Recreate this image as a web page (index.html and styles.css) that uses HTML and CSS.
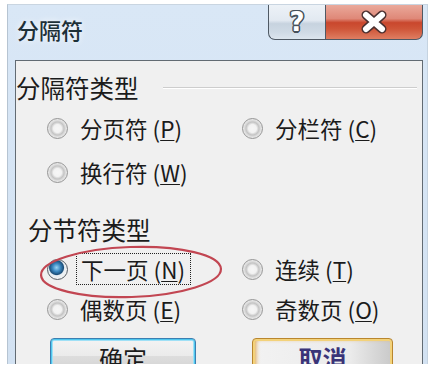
FILE: index.html
```html
<!DOCTYPE html>
<html lang="zh-CN">
<head>
<meta charset="utf-8">
<title>分隔符</title>
<link rel="stylesheet" href="styles.css">
</head>
<body>
<div class="window">
  <div class="titlebar">
    <div class="title">分隔符</div>
    <div class="caption">
      <div class="cbtn help"><span class="qmark">?</span></div>
      <div class="cbtn close">
        <svg width="30" height="24" viewBox="0 0 30 24">
          <path d="M7 5 L23 19 M23 5 L7 19" stroke="#4a3030" stroke-width="9" stroke-linecap="round"/>
          <path d="M7 5 L23 19 M23 5 L7 19" stroke="#ffffff" stroke-width="6" stroke-linecap="round"/>
        </svg>
      </div>
    </div>
  </div>
  <div class="client">
    <div class="ghead">
      <span class="glabel">分隔符类型</span>
      <span class="gline"></span>
    </div>
    <div class="options rows1">
      <div class="opt"><span class="radio"></span><span class="txt">分页符 (<u>P</u>)</span></div>
      <div class="opt"><span class="radio"></span><span class="txt">分栏符 (<u>C</u>)</span></div>
      <div class="opt"><span class="radio"></span><span class="txt">换行符 (<u>W</u>)</span></div>
    </div>
    <div class="ghead second">
      <span class="glabel">分节符类型</span>
    </div>
    <div class="options rows2">
      <div class="opt"><span class="radio on"></span><span class="txt focus">下一页 (<u>N</u>)</span></div>
      <div class="opt"><span class="radio"></span><span class="txt">连续 (<u>T</u>)</span></div>
      <div class="opt"><span class="radio"></span><span class="txt">偶数页 (<u>E</u>)</span></div>
      <div class="opt"><span class="radio"></span><span class="txt">奇数页 (<u>O</u>)</span></div>
    </div>
    <div class="buttons">
      <div class="btn ok">确定</div>
      <div class="btn cancel">取消</div>
    </div>
  </div>
  <svg class="mark" width="190" height="62" viewBox="0 0 190 62">
    <ellipse cx="94" cy="30" rx="90" ry="25" fill="none" stroke="#c24652" stroke-width="2.2" transform="rotate(-2 94 30)"/>
  </svg>
</div>
</body>
</html>
```

FILE: styles.css
```css
html, body {
  margin: 0;
  padding: 0;
}
body {
  width: 436px;
  height: 370px;
  overflow: hidden;
  background: #ffffff;
  font-family: "Noto Sans CJK SC", "Noto Sans", sans-serif;
  color: #1b1b1b;
}
.window {
  position: relative;
  box-sizing: border-box;
  margin: 4px 0 0 7px;
  width: 421px;
  height: 360px;
  overflow: hidden;
  background: linear-gradient(to bottom, #d9e7f6 0%, #d5e4f4 60%, #d3e2f2 100%);
  border-left: 1px solid #b6c4d2;
  border-top: 1px solid #c9d5e1;
  border-right: 1px solid #c5d3e0;
  display: flex;
  flex-direction: column;
}
.titlebar {
  display: flex;
  align-items: flex-start;
  height: 55px;
  flex: none;
}
.title {
  margin: 12px 0 0 9px;
  font-size: 22px;
  line-height: 24px;
  color: #1d3038;
  font-weight: 500;
  text-shadow: 0 0 6px rgba(255,255,255,0.9);
}
.caption {
  margin-left: auto;
  margin-right: 4px;
  display: flex;
  height: 35px;
}
.cbtn {
  box-sizing: border-box;
  height: 35px;
  display: flex;
  align-items: center;
  justify-content: center;
  border: 1px solid #4f5964;
  border-top: none;
}
.help {
  width: 57px;
  border-right: none;
  border-radius: 0 0 0 7px;
  background: linear-gradient(to bottom, #edf2f7 0%, #e2e9f1 45%, #c7d3df 55%, #cfdae5 80%, #dce5ee 100%);
}
.qmark {
  font-family: "DejaVu Sans", sans-serif;
  font-weight: bold;
  font-size: 26px;
  line-height: 26px;
  color: #ffffff;
  text-shadow: 1.5px 0 0 #46505a, -1.5px 0 0 #46505a, 0 1.5px 0 #46505a, 0 -1.5px 0 #46505a, 1px 1px 0 #46505a, -1px -1px 0 #46505a, 1px -1px 0 #46505a, -1px 1px 0 #46505a;
}
.close {
  width: 98px;
  border-radius: 0 0 7px 0;
  background: linear-gradient(to bottom, #eaa99b 0%, #df8878 40%, #c9472d 52%, #cf5538 70%, #df7e62 100%);
}
.client {
  box-sizing: border-box;
  margin: 0 4px 0 7px;
  flex: 1;
  background: #f0f0f0;
  border: 1px solid #626b73;
  border-bottom: none;
  padding-top: 13px;
}
.ghead {
  display: flex;
  align-items: center;
  height: 28px;
}
.glabel {
  font-size: 24.5px;
  line-height: 28px;
  white-space: nowrap;
}
.gline {
  flex: 1;
  height: 1px;
  background: #cdcdcd;
  border-bottom: 1px solid #ffffff;
  margin: 0 5px 0 24px;
}
.ghead.second {
  margin-top: 22px;
  padding-left: 12px;
}
.options {
  display: grid;
  grid-template-columns: 195px 1fr;
  padding-left: 31px;
}
.rows1 {
  margin-top: 4px;
  grid-auto-rows: 44px;
}
.rows2 {
  margin-top: 5px;
  grid-auto-rows: 40px;
}
.opt {
  display: flex;
  align-items: center;
}
.radio {
  box-sizing: border-box;
  width: 21px;
  height: 21px;
  border-radius: 50%;
  border: 1px solid #959595;
  background: radial-gradient(circle at 50% 50%, #f6f6f6 0%, #f2f2f2 30%, #c4c4c4 48%, #dcdcdc 60%, #f4f4f4 78%, #d2d2d2 100%);
  flex: none;
}
.radio.on {
  border-color: #555d64;
  background: radial-gradient(circle at 45% 40%, #9ad4f4 0%, #3d8ac2 25%, #1b4f7a 45%, #e8eef2 52%, #f3f3f3 78%, #c8c8c8 100%);
}
.txt {
  margin-left: 12px;
  font-size: 22.5px;
  line-height: 28px;
  white-space: nowrap;
}
.txt u {
  text-decoration-thickness: 1px;
  text-underline-offset: 2px;
}
.txt.focus {
  margin-left: 9px;
  padding: 1px 5px 1px 4px;
  outline: 1px dotted #222222;
  outline-offset: 0;
}
.buttons {
  display: flex;
  gap: 56px;
  margin-top: 9px;
  padding-left: 34px;
}
.btn {
  box-sizing: border-box;
  height: 36px;
  border-radius: 4px;
  text-align: center;
  font-size: 24px;
  line-height: 34px;
  padding-top: 2px;
}
.ok {
  width: 146px;
  border: 1px solid #3c7fb1;
  box-shadow: inset 0 0 0 1px #4fc7ee, inset 0 0 0 2px #9fe0f6;
  background: linear-gradient(to bottom, #f3f3f3 0%, #ebebeb 50%, #dddddd 51%, #d2d2d2 100%);
}
.cancel {
  width: 141px;
  border: 1px solid #b9862e;
  box-shadow: inset 0 0 0 2px #f3d27a, inset 3px 0 4px #e3a64a;
  background: linear-gradient(to right, #f2f2f2 0%, #ebebeb 70%, #c9c9c9 100%);
  color: #3a3478;
  font-weight: bold;
}
.mark {
  position: absolute;
  left: 29px;
  top: 237px;
}
```
